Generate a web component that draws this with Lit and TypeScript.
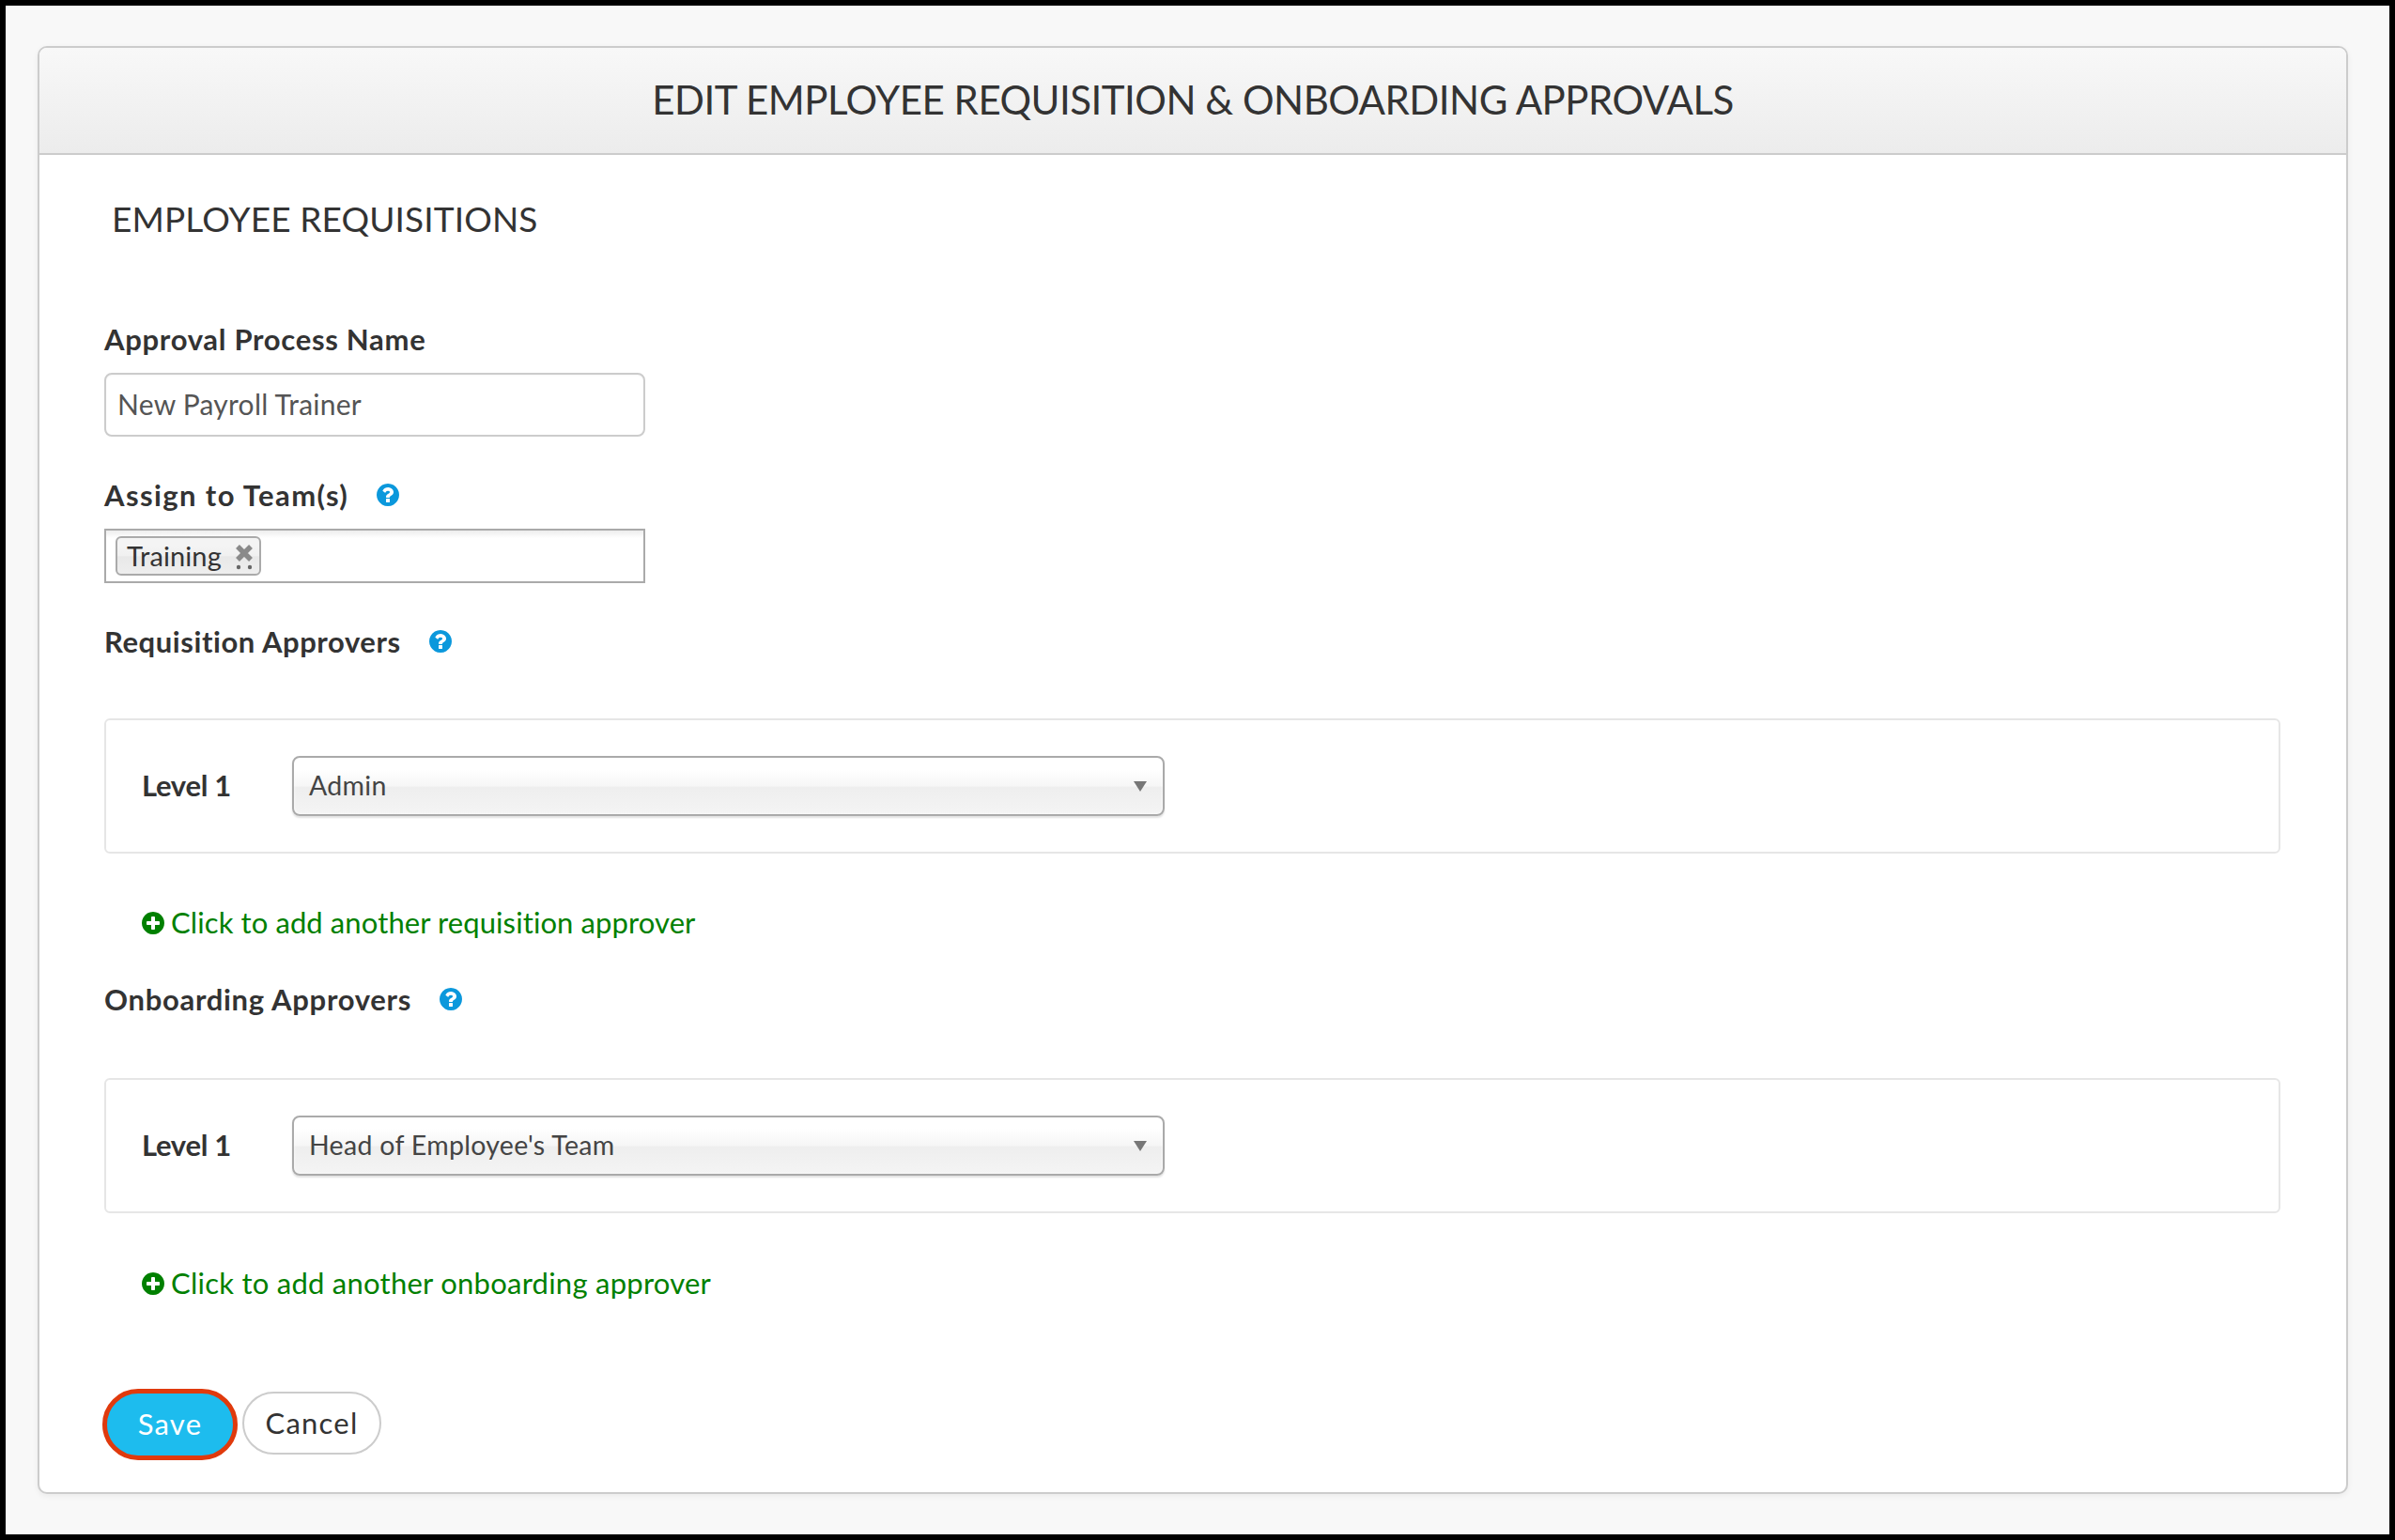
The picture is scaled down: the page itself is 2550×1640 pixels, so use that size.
import { LitElement, html, css, svg } from "lit";
import { customElement } from "lit/decorators.js";

const helpPath = "M1024 1376v-192q0-14-9-23t-23-9h-192q-14 0-23 9t-9 23v192q0 14 9 23t23 9h192q14 0 23-9t9-23zm256-672q0-88-55.5-163t-138.5-116-170-41q-243 0-371 213-15 24 8 42l132 100q7 6 19 6 16 0 25-12 53-68 86-92 34-24 86-24 48 0 85.5 26t37.5 59q0 38-20 61t-68 45q-63 28-115.5 86.5t-52.5 125.5v36q0 14 9 23t23 9h192q14 0 23-9t9-23q0-19 21.5-49.5t54.5-49.5q32-18 49-28.5t46-35 44.5-48 28-60.5 12.5-81zm384 192q0 209-103 385.5t-279.5 279.5-385.5 103-385.5-103-279.5-279.5-103-385.5 103-385.5 279.5-279.5 385.5-103 385.5 103 279.5 279.5 103 385.5z";
const plusPath = "M1344 960v-128q0-26-19-45t-45-19h-256v-256q0-26-19-45t-45-19h-128q-26 0-45 19t-19 45v256h-256q-26 0-45 19t-19 45v128q0 26 19 45t45 19h256v256q0 26 19 45t45 19h128q26 0 45-19t19-45v-256h256q26 0 45-19t19-45zm320-64q0 209-103 385.5t-279.5 279.5-385.5 103-385.5-103-279.5-279.5-103-385.5 103-385.5 279.5-279.5 385.5-103 385.5 103 279.5 279.5 103 385.5z";

const faIcon = (d: string, cls: string) => html`<svg class=${cls} viewBox="128 128 1536 1536">${svg`<path d=${d} fill="currentColor"></path>`}</svg>`;

@customElement("app-root")
export class AppRoot extends LitElement {
  static styles = css`
    :host { display: block; width: 2550px; height: 1640px; box-sizing: border-box; padding: 6px; background: #000; font-family: Lato, "Liberation Sans", sans-serif; color: #333; }
    * { box-sizing: border-box; }
    .frame { height: 1628px; background: #f8f8f8; padding: 43px 44px 43px 34px; }
    .card { height: 1542px; background: #fff; border: 2px solid #ccc; border-radius: 10px; box-shadow: 0 2px 6px rgba(0,0,0,.06); overflow: hidden; }
    .head { height: 114px; background: linear-gradient(#f8f8f8, #ececec); border-bottom: 2px solid #ccc; display: flex; align-items: center; justify-content: center; }
    .title { font-size: 42px; font-weight: 400; color: #333; white-space: nowrap; letter-spacing: -0.5px; padding-bottom: 2px; }
    .body { padding: 49px 70px 0 69px; }
    .section { margin-left: 8px; height: 40px; line-height: 38px; font-size: 37px; color: #333; white-space: nowrap; letter-spacing: 0.12px; }
    .label { display: flex; align-items: center; height: 36px; line-height: 34px; font-size: 31px; font-weight: 700; color: #333; white-space: nowrap; }
    .help { width: 24px; height: 24px; color: #0b98dc; margin-left: 30px; flex: none; }
    .m-name { margin-top: 89px; letter-spacing: 0.7px; }
    .m-team { margin-top: 45px; letter-spacing: 1.4px; }
    .m-req { margin-top: 44px; letter-spacing: 0.57px; }
    .m-onb { margin-top: 45px; letter-spacing: 0.7px; }
    .input { margin-top: 18px; width: 576px; height: 68px; margin-bottom: -1px; border: 2px solid #ccc; border-radius: 8px; padding: 0 12px 2px; display: flex; align-items: center; font-size: 30px; letter-spacing: 0.25px; color: #555; box-shadow: inset 0 1px 2px rgba(0,0,0,.04); }
    .tags { margin-top: 18px; width: 576px; height: 58px; border: 2px solid #aaa; background: linear-gradient(#eee 1%, #fff 15%); padding: 6px 10px; display: flex; align-items: flex-start; }
    .tag { width: 155px; height: 42px; border: 2px solid #aaa; border-radius: 6px; background: linear-gradient(#f4f4f4 20%, #f0f0f0 50%, #e8e8e8 52%, #eee 100%); display: flex; align-items: center; padding: 0 6px 0 10px; justify-content: space-between; font-size: 29px; letter-spacing: 0.1px; color: #333; }
    .tag span { padding-bottom: 2px; }
    .x { width: 20px; height: 32px; flex: none; margin-top: 6px; }
    .box { width: 2317px; height: 144px; border: 2px solid #e6e6e6; border-radius: 6px; padding: 0 38px; display: flex; align-items: center; }
    .box-a { margin-top: 64px; }
    .box-b { margin-top: 66px; }
    .lvl { width: 160px; font-size: 31px; letter-spacing: -0.3px; font-weight: 700; color: #333; flex: none; white-space: nowrap; padding-bottom: 2px; }
    .select { width: 929px; height: 64px; border: 2px solid #aaa; border-radius: 8px; background: linear-gradient(#fff 20%, #f6f6f6 50%, #eee 52%, #f4f4f4 100%); box-shadow: inset 0 0 3px #fff, 0 2px 2px rgba(0,0,0,.12); display: flex; align-items: center; justify-content: space-between; padding: 0 17px 0 16px; font-size: 28.5px; letter-spacing: 0.3px; color: #444; }
    .select span { padding-bottom: 3px; }
    .arrow { width: 14px; height: 11px; flex: none; }
    .add { display: flex; align-items: center; height: 36px; margin-left: 40px; font-size: 31px; color: #008000; white-space: nowrap; }
    .add span { padding-bottom: 3px; }
    .add svg { width: 24px; height: 24px; margin-right: 7px; flex: none; }
    .add-a { margin-top: 56px; letter-spacing: 0.1px; }
    .add-b { margin-top: 57px; letter-spacing: 0.25px; }
    .actions { margin-top: 94px; margin-left: -2px; display: flex; align-items: center; gap: 5px; }
    .btn { display: flex; align-items: center; justify-content: center; border-radius: 34px; font-size: 31px; letter-spacing: 1.2px; white-space: nowrap; padding-bottom: 2px; }
    .save { width: 144px; height: 76px; border: 5px solid #e03a0d; border-radius: 38px; background: #1dbcee; color: #fff; }
    .cancel { width: 148px; height: 67px; border: 2px solid #ccc; background: #fff; color: #333; margin-bottom: 3px; }
  `;

  private helpIcon() { return faIcon(helpPath, "help"); }

  private approvers(boxCls: string, value: string, addCls: string, addText: string) {
    return html`
      <div class="box ${boxCls}">
        <div class="lvl">Level 1</div>
        <div class="select">
          <span>${value}</span>
          <svg class="arrow" viewBox="0 0 14 11"><path d="M0 0H14L7 11Z" fill="#777"></path></svg>
        </div>
      </div>
      <div class="add ${addCls}">${faIcon(plusPath, "")}<span>${addText}</span></div>`;
  }

  render() {
    return html`
      <div class="frame">
        <div class="card">
          <div class="head"><div class="title">EDIT EMPLOYEE REQUISITION &amp; ONBOARDING APPROVALS</div></div>
          <div class="body">
            <div class="section">EMPLOYEE REQUISITIONS</div>
            <div class="label m-name">Approval Process Name</div>
            <div class="input">New Payroll Trainer</div>
            <div class="label m-team">Assign to Team(s)${this.helpIcon()}</div>
            <div class="tags">
              <div class="tag">
                <span>Training</span>
                <svg class="x" viewBox="0 0 20 32">
                  <path d="M3 3L17 17M17 3L3 17" stroke="#8a8a8a" stroke-width="5.5" fill="none"></path>
                  <circle cx="4" cy="25" r="2.2" fill="#666"></circle>
                  <circle cx="16" cy="25" r="2.2" fill="#666"></circle>
                </svg>
              </div>
            </div>
            <div class="label m-req">Requisition Approvers${this.helpIcon()}</div>
            ${this.approvers("box-a", "Admin", "add-a", "Click to add another requisition approver")}
            <div class="label m-onb">Onboarding Approvers${this.helpIcon()}</div>
            ${this.approvers("box-b", "Head of Employee's Team", "add-b", "Click to add another onboarding approver")}
            <div class="actions">
              <div class="btn save">Save</div>
              <div class="btn cancel">Cancel</div>
            </div>
          </div>
        </div>
      </div>`;
  }
}
